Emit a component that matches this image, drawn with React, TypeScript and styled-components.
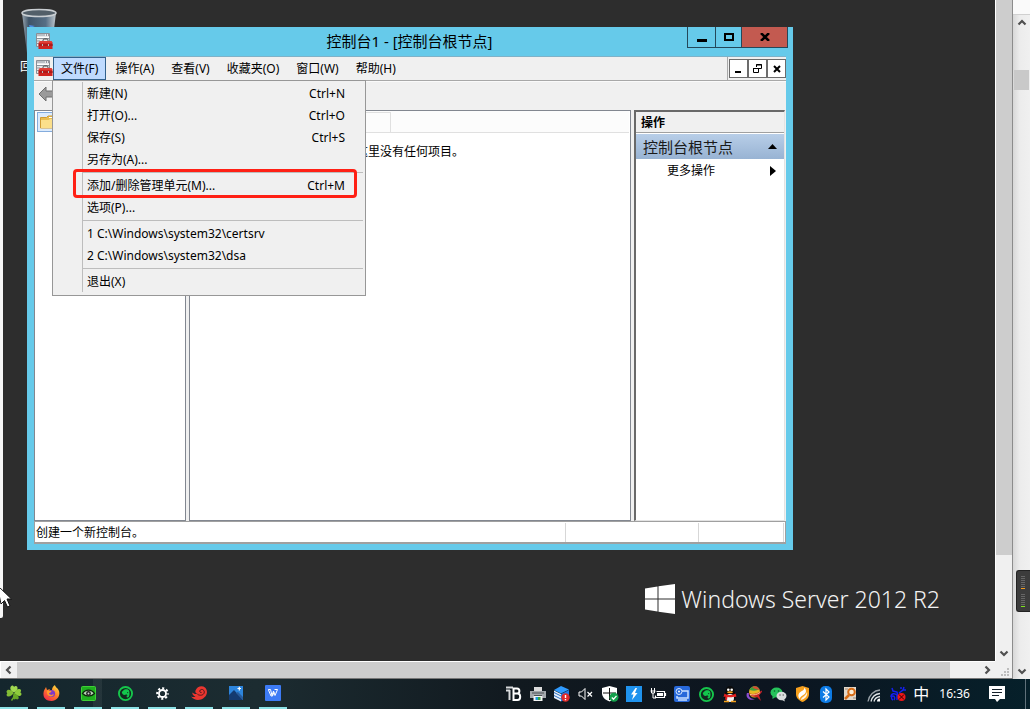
import React from "react";
import styled, { createGlobalStyle } from "styled-components";

const uiFont = `"Noto Sans", "Noto Sans CJK SC", sans-serif`;

const GlobalStyle = createGlobalStyle`
  * { box-sizing: border-box; }
  body { margin: 0; background: #2d2d2d; font-family: ${uiFont}; font-size: 12px; line-height: 16px; color: #000; }
  button { margin: 0; padding: 0; border: 0; background: none; color: inherit; font: inherit; }
  svg { display: block; flex: none; }
  h1, h2, p { margin: 0; padding: 0; font-weight: 400; }
`;

const Page = styled.div`
  display: flex;
  flex-direction: column;
  min-height: 100vh;
`;

const Workspace = styled.div`
  flex: 1;
  display: flex;
`;

const Viewer = styled.main`
  flex: 1;
  min-width: 0;
  display: grid;
  grid-template-columns: minmax(0, 1fr) 17px;
  grid-template-rows: minmax(0, 1fr) 17px;
  background: #f0f0f0;
  border-right: 1px solid #8c8c8c;
  border-bottom: 1px solid #777;
`;

const Desktop = styled.section`
  position: relative;
  min-height: 640px;
  overflow: hidden;
  background: #2d2d2d;
`;

const EdgeStrip = styled.div`
  position: absolute;
  left: 0;
  top: 0;
  bottom: 43px;
  width: 3px;
  background: #f6f6f6;
  border-radius: 0 0 2px 0;
`;

const Pointer = styled.svg`
  position: absolute;
  left: 0;
  bottom: 53px;
`;

const RecycleBin = styled.div`
  position: absolute;
  left: 20px;
  top: 8px;
  display: flex;
  flex-direction: column;
  gap: 3px;
  color: #fff;
`;

const Brand = styled.div`
  position: absolute;
  right: 55px;
  bottom: 46px;
  display: flex;
  align-items: center;
  gap: 6px;
  color: #f2f2f2;
  font-size: 23px;
  font-weight: 300;
  line-height: 32px;
  white-space: nowrap;
`;

const Track = styled.div<{ $vertical?: boolean }>`
  display: flex;
  flex-direction: ${(p) => (p.$vertical ? "column" : "row")};
  background: #f0f0f0;
  border: 0 solid #fff;
  border-width: ${(p) => (p.$vertical ? "0 0 0 1px" : "1px 0 0 1px")};
`;

const Thumb = styled.div<{ $grow: number }>`
  flex: ${(p) => p.$grow} 1 0;
  background: #cdcdcd;
`;

const Gap = styled.div<{ $grow: number }>`
  flex: ${(p) => p.$grow} 1 0;
`;

const ArrowButton = styled.button`
  flex: none;
  width: 16px;
  height: 16px;
  display: grid;
  place-items: center;
`;

const Corner = styled.div`
  display: flex;
  align-items: flex-end;
  justify-content: flex-end;
  padding: 2px 3px;
`;

const OuterBar = styled.aside`
  position: relative;
  flex: none;
  width: 17px;
  display: flex;
  flex-direction: column;
  align-items: center;
  background: linear-gradient(90deg, #d8d8d8, #ececec 40%, #f0f0f0);
`;

const OuterHead = styled.div`
  align-self: stretch;
  height: 15px;
  background: #fafafa;
  border-bottom: 1px solid #d0d0d0;
`;

const OuterThumb = styled.div`
  width: 15px;
  height: 20px;
  margin: 39px 0 auto;
  background: #c9c9c9;
`;

const Meter = styled.div`
  position: absolute;
  right: 0;
  bottom: 67px;
  width: 14px;
  height: 42px;
  padding: 4px 3px;
  background: #3c3c3c;
  border: 1px solid #222;
  border-right: 0;
  border-radius: 3px 0 0 3px;
`;

/* Console window */

const Window = styled.section`
  position: absolute;
  left: 27px;
  right: 202px;
  top: 27px;
  bottom: 111px;
  min-height: 420px;
  display: flex;
  flex-direction: column;
  padding: 0 7px 6px;
  background: #66caea;
`;

const TitleBar = styled.header`
  position: relative;
  display: flex;
  align-items: center;
  height: 30px;
  padding-left: 2px;
  border-bottom: 1px solid #7fb2c8;
`;

const Title = styled.h1`
  flex: 1;
  margin-right: 20px;
  padding-bottom: 2px;
  text-align: center;
  font-size: 15px;
  line-height: 24px;
`;

const CaptionButtons = styled.div`
  position: absolute;
  right: -2px;
  top: 0;
  display: flex;
  border: 1px solid #24485a;
  border-top: 0;
`;

const CaptionButton = styled.button<{ $width: number; $close?: boolean }>`
  width: ${(p) => p.$width}px;
  height: 20px;
  display: grid;
  place-items: center;
  background: ${(p) => (p.$close ? "#c35a50" : "transparent")};
  & + & { border-left: 1px solid #24485a; }
`;

const MenuBar = styled.nav`
  position: relative;
  display: flex;
  gap: 1px;
  height: 24px;
  padding-left: 2px;
  background: #f0f0f0;
  border-bottom: 1px solid #a8a8a8;
`;

const MenuIcon = styled.span`
  display: flex;
  align-items: center;
  width: 16px;
`;

const MenuButton = styled.button<{ $open?: boolean }>`
  padding: 1px 7px 0;
  border: 1px solid ${(p) => (p.$open ? "#31618c" : "transparent")};
  background: ${(p) => (p.$open ? "#bfdbff" : "transparent")};
  white-space: nowrap;
`;

const MdiButtons = styled.div`
  display: flex;
  align-items: center;
  margin-left: auto;
  padding-left: 1px;
  border-left: 1px solid #a8a8a8;
`;

const MdiButton = styled.button`
  width: 19px;
  height: 19px;
  display: grid;
  place-items: center;
  border: 1px solid #6c6c6c;
  background: #fff;
`;

const DropMenu = styled.div`
  position: absolute;
  z-index: 2;
  left: 18px;
  top: 23px;
  width: 314px;
  padding: 1px 2px 3px;
  background: #f0f0f0;
  border: 1px solid #979797;
`;

const MenuList = styled.div`
  margin-left: 27px;
  border-left: 1px solid #bdbdbd;
`;

const MenuItem = styled.button`
  position: relative;
  display: flex;
  justify-content: space-between;
  align-items: center;
  width: 100%;
  height: 22px;
  padding: 2px 18px 0 4px;
  text-align: left;
  white-space: nowrap;
`;

const Rule = styled.hr`
  height: 1px;
  margin: 2px 0 1px;
  border: 0;
  background: #bdbdbd;
`;

const Highlight = styled.span`
  position: absolute;
  left: -10px;
  right: 6px;
  top: -5px;
  bottom: -2px;
  border: 3px solid #ff2015;
  border-radius: 4px;
  pointer-events: none;
`;

const ToolBar = styled.div`
  display: flex;
  align-items: center;
  height: 29px;
  padding: 0 4px 5px;
  background: #f0f0f0;
  border-top: 1px solid #fafafa;
`;

const Panes = styled.div`
  flex: 1;
  min-height: 0;
  display: grid;
  grid-template-columns: 152px minmax(0, 1fr) 151px;
  gap: 3px;
  padding-right: 1px;
  background: #f0f0f0;
`;

const Pane = styled.section`
  display: flex;
  flex-direction: column;
  background: #fff;
  border: 1px solid #828790;
`;

const TreeNode = styled.button`
  margin: 1px 2px;
  height: 20px;
  padding: 0 2px;
  display: flex;
  align-items: center;
  background: #dcebfc;
  border: 1px solid #84acdd;
`;

const ColumnHead = styled.div`
  height: 22px;
  padding-top: 1px;
  margin-right: 1px;
  background: #fcfcfc;
  border-bottom: 1px solid #e0e0e0;
`;

const Column = styled.div`
  width: 201px;
  height: 20px;
  border-top: 1px solid #e0e0e0;
  border-right: 1px solid #e0e0e0;
`;

const EmptyNote = styled.p`
  margin-top: 11px;
  text-align: center;
`;

const ActionsPane = styled(Pane)`
  border: 0;
  border-top: 2px solid #696969;
  border-left: 2px solid #696969;
  border-right: 1px solid #e3e3e3;
  border-bottom: 1px solid #e3e3e3;
`;

const ActionsHead = styled.h2`
  height: 21px;
  padding: 3px 5px 1px;
  font-size: 12px;
  font-weight: 700;
  background: #f0f0f0;
  border-bottom: 1px solid #a0a0a0;
`;

const ActionsTitle = styled.button`
  display: flex;
  justify-content: space-between;
  align-items: center;
  height: 25px;
  margin-top: 1px;
  padding: 0 7px;
  font-size: 15px;
  color: #1a1a1a;
  background: linear-gradient(#b8cee8, #98b3d3);
`;

const ActionItem = styled.button`
  display: flex;
  justify-content: space-between;
  align-items: center;
  height: 24px;
  padding: 0 8px 0 31px;
`;

const StatusBar = styled.footer`
  display: flex;
  height: 23px;
  padding-right: 1px;
  background: #fff;
  border: 1px solid #a0a0a0;
  border-bottom-width: 2px;
`;

const StatusCell = styled.span<{ $width?: number }>`
  flex: ${(p) => (p.$width ? `0 0 ${p.$width}px` : "1")};
  margin-top: 1px;
  padding: 2px 1px;
  line-height: 16px;
  border-right: 1px solid #d7d7d7;
`;

/* Host taskbar */

const TaskBar = styled.footer`
  display: flex;
  justify-content: space-between;
  height: 30px;
  background: linear-gradient(90deg, #14262d, #1c2c31 25%, #11191f 50%, #0c1520 75%, #06202a);
  color: #fff;
`;

const AppList = styled.div`
  display: flex;
  gap: 9px;
`;

const AppButton = styled.button<{ $stacked?: boolean }>`
  width: 28px;
  display: grid;
  place-items: center;
  border-bottom: 2px solid #8ce2e6;
  background: ${(p) =>
    p.$stacked ? "linear-gradient(90deg, transparent 19px, rgba(255, 255, 255, 0.06) 19px)" : "none"};
`;

const Tray = styled.div`
  display: flex;
  align-items: center;
`;

const TrayButton = styled.button<{ $narrow?: boolean }>`
  width: ${(p) => (p.$narrow ? 22 : 24)}px;
  height: 30px;
  display: grid;
  place-items: center;
  font-size: 16px;
`;

const Clock = styled.time`
  margin: 0 19px 0 7px;
`;

const ShowDesktop = styled.button`
  align-self: stretch;
  width: 5px;
  margin-left: 20px;
  border-left: 1px solid #60717a;
`;

const ConsoleIcon = () => (
  <svg width="17" height="17" viewBox="0 0 17 17">
    <path d="M.5.5h13v13H.5z" fill="#e6e8ea" stroke="#8a8f96" />
    <path d="M1 2h8" stroke="#8c96a0" />
    <path d="M1 4.500h12" stroke="#fff" />
    <path d="M1 5.500h12M1 8h3M1 10.500h2" stroke="#8b939b" />
    <path d="M10 2h1M12 2h1" stroke="#445" />
    <path d="M7 9V7.500C7 6.500 7.500 6 8.500 6h2c1 0 1.500.5 1.500 1.500V9" fill="none" stroke="#3a3a3a" />
    <path d="M3 9.500L4 8h11.500l1 1.500V16H2.500V9.500z" fill="#cf2420" />
    <path d="M3 9h13" stroke="#ee5a4e" />
    <path d="M2.500 12H17" stroke="#8e1012" />
    <path d="M6 11h1v2H6zM12 11h1v2h-1z" fill="#b9bcc0" />
  </svg>
);

const BinIcon = () => (
  <svg width="38" height="48" viewBox="0 0 38 48">
    <defs>
      <linearGradient id="bin" x1="0" x2="1" y1="0" y2="0">
        <stop offset="0" stopColor="#9aa7b1" />
        <stop offset=".2" stopColor="#3f5468" />
        <stop offset=".7" stopColor="#566e84" />
        <stop offset="1" stopColor="#c0c8ce" />
      </linearGradient>
    </defs>
    <path d="M2 5l5 40c4 3 20 3 24 0l5-40z" fill="url(#bin)" />
    <ellipse cx="19" cy="5" rx="17" ry="3.500" fill="#525f69" stroke="#c9ced2" strokeWidth="1.500" />
    <path d="M9 17l6 1-5 2z" fill="#4d8ee8" />
  </svg>
);

const Chevron = ({ turn }: { turn: number }) => (
  <svg width="10" height="10" viewBox="0 0 10 10">
    <path d="M1.500 6.500L5 3l3.500 3.500" transform={`rotate(${turn} 5 5)`} fill="none" stroke="#505050" strokeWidth="2.200" />
  </svg>
);

const Evernote = () => (
  <svg width="15" height="15" viewBox="0 0 16 16">
    <circle cx="8" cy="8" r="7" fill="#12281f" stroke="#16c64c" strokeWidth="2" />
    <path d="M4 6.500L6.500 4C9 3 11.500 3.500 12 5.500c.6 3 .2 5.500-1 6.500-1 .5-2-.2-1.800-1.200.1-.8 1-.6 1.300-.4-.2-1-1.500-1-2-1.300C6.500 10 4.500 9.500 4 6.500z" fill="#13c74d" />
    <circle cx="10.300" cy="7" r=".6" fill="#12281f" />
  </svg>
);

const taskApps: { name: string; stacked?: boolean; icon: React.ReactNode }[] = [
  {
    name: "Clover",
    icon: (
      <svg width="16" height="16" viewBox="0 0 16 16">
        <path d="M8 8c1 3 0 5-2.500 7.500" stroke="#6aa82a" strokeWidth="1.500" fill="none" />
        <path d="M8 7.500C5 6.500 3.500 3.500 4.800 1.500 6 0 7.500.5 8 2c1-1.500 3-1.200 3.500.5.5 2-1.500 4-3.500 5z" fill="#a0d850" />
        <path d="M8.500 8c.5-2.500 3-4.500 5-4 2 .3 2 2.500.7 3.300C16 8 16 10.500 14 11c-2 .3-4.500-1-5.500-3z" fill="#8ecb3c" />
        <path d="M7.500 8C6 5.500 3 4.200 1.300 5.200.2 6 .3 7.500 1.300 8.200 0 9.500.5 11.500 2.500 11.500c2 0 4-1.500 5-3.500z" fill="#82bd35" />
        <path d="M8 8.500c2.500.5 5 2.500 4.700 4.500-.3 1.700-2 1.800-2.800.8-1 1.200-2.700.7-2.900-.8-.2-1.500.3-3 1-4.500z" fill="#68a826" />
      </svg>
    ),
  },
  {
    name: "Firefox",
    icon: (
      <svg width="17" height="17" viewBox="0 0 17 17">
        <defs>
          <linearGradient id="fox" x1=".9" y1="0" x2=".2" y2="1">
            <stop offset="0" stopColor="#ffe640" />
            <stop offset=".5" stopColor="#ff7a2a" />
            <stop offset="1" stopColor="#f0284c" />
          </linearGradient>
        </defs>
        <path d="M3 2l1 3 3-1-1 2 3-1c0-2 1-4 3-5 0 2 3 3 4 6 1.500 5-2 10-7.500 10S0 13 .5 8C.7 5.500 2 4 3 2z" fill="url(#fox)" />
        <circle cx="8.500" cy="8.500" r="3.600" fill="#8038c8" />
        <path d="M4 6c2-1 3 0 4.500 0C8 8 6 7.500 6 8.500c1 2 4 1.500 5 .5-1 4-8 3-7-3z" fill="#ff9a2a" />
      </svg>
    ),
  },
  {
    name: "Viewer",
    stacked: true,
    icon: (
      <svg width="15" height="15" viewBox="0 0 15 15">
        <rect x=".5" y=".5" width="14" height="14" rx="1" fill="#1fae1f" stroke="#3fd036" />
        <path d="M1.500 7.500c3-4.500 9-4.500 12 0-3 3.500-9 3.500-12 0z" fill="#b9d4b6" stroke="#0c260c" strokeWidth="1.300" />
        <circle cx="7.500" cy="7.500" r="2.400" fill="#222" />
        <circle cx="7.500" cy="7.500" r="1" fill="#ccc" />
      </svg>
    ),
  },
  { name: "Evernote", icon: <Evernote /> },
  {
    name: "设置",
    icon: (
      <svg width="13" height="13" viewBox="0 0 14 14">
        <circle cx="7" cy="7" r="3.800" fill="none" stroke="#fff" strokeWidth="2" />
        <circle cx="7" cy="7" r="5.700" fill="none" stroke="#fff" strokeWidth="2.200" strokeDasharray="2.240 2.240" strokeDashoffset="1.100" />
      </svg>
    ),
  },
  {
    name: "Shell",
    icon: (
      <svg width="17" height="16" viewBox="0 0 17 16">
        <path d="M4.500 5.500C6 1.500 11 0 14 2.500c4 4 1.500 10-4 12-4 1.200-7.500 0-10-3 2 .8 3.500.7 4.500.2C2 10.500 1 9 1.500 7.500 3 9 5 9.300 6.500 9 4.500 8.500 4 7 4.500 5.500z" fill="#ea3630" />
        <path d="M6.500 9.300c2.500 1.700 6 1 6.700-1.500.6-2.700-2.200-4.300-3.900-2.800-1.200 1.200-.3 3 1.200 2.500" fill="none" stroke="#4a1a1c" strokeWidth="1" />
      </svg>
    ),
  },
  {
    name: "照片",
    icon: (
      <svg width="14" height="14" viewBox="0 0 14 14">
        <path d="M0 0h14v14H0z" fill="#2d85dc" />
        <path d="M0 9l5-5 9 10H0z" fill="#143a70" />
        <path d="M7 7l2-1 5 5v3z" fill="#285c9c" />
        <path d="M8.500 2.500h3.500M10.300 .8v3.600" stroke="#fff" strokeWidth="1.200" />
      </svg>
    ),
  },
  {
    name: "WPS",
    icon: (
      <svg width="16" height="16" viewBox="0 0 16 16">
        <rect width="16" height="16" rx="1" fill="#3d7bf5" />
        <path d="M3.200 4.500h2.300L7 10.500 8.500 6 10 10.500l2.500-6H9.500M3.500 5L6 11h1.500L9 7" fill="none" stroke="#fff" strokeWidth="1" />
      </svg>
    ),
  },
];

const trayIcons: { name: string; icon: React.ReactNode }[] = [
  {
    name: "TB",
    icon: (
      <svg width="16" height="16" viewBox="0 0 16 16">
        <path d="M0 1.500h7M0 4.500h4M3.500 4v10" stroke="#d8dadc" strokeWidth="2" />
        <path d="M7.500 2.500H11c3.200 0 3.200 5 0 5H7.500zM7.500 7.500h4c3.600 0 3.600 6.500 0 6.500h-4z" fill="none" stroke="#fff" strokeWidth="2" />
      </svg>
    ),
  },
  {
    name: "打印机",
    icon: (
      <svg width="16" height="16" viewBox="0 0 16 16">
        <path d="M4 1h8v5H4z" fill="#dcdcdc" />
        <path d="M0 5h16v7H0z" fill="#a4a8ac" />
        <path d="M2 7h12M4 9.500h8" stroke="#4c5054" />
        <path d="M3.500 10h9v5h-9z" fill="#f5f5f5" />
        <path d="M5.500 11H8v3H5.500z" fill="#1f9adb" />
        <path d="M8 11h2.500v3H8z" fill="#3aa640" />
      </svg>
    ),
  },
  {
    name: "服务器",
    icon: (
      <svg width="16" height="16" viewBox="0 0 16 16">
        <path d="M0 4l7-4 8 3.500-8 4z" fill="#2f9bff" />
        <path d="M0 4.500l7 3.500v7.500L0 12z" fill="#e8f0fa" />
        <path d="M15 4L7 8v7.500l8-4z" fill="#1f7be6" />
        <path d="M0 6.500L7 10M0 9.500L7 13" stroke="#2a6cc0" fill="none" />
        <circle cx="11.500" cy="11.500" r="4.200" fill="#e02a2a" />
        <path d="M11.500 9v3M11.500 13v1.200" stroke="#fff" strokeWidth="1.400" />
      </svg>
    ),
  },
  {
    name: "静音",
    icon: (
      <svg width="16" height="16" viewBox="0 0 16 16">
        <path d="M1 6h2.500L7 2.500v11L3.500 10H1z" fill="none" stroke="#fff" />
        <path d="M9.500 6l4.500 4.500M14 6l-4.500 4.500" stroke="#fff" strokeWidth="1.200" />
      </svg>
    ),
  },
  {
    name: "安全中心",
    icon: (
      <svg width="17" height="16" viewBox="0 0 17 16">
        <path d="M7.500 0L15 2v5c0 4-3 7-7.500 8.500C3 14 0 11 0 7V2z" fill="#fff" />
        <path d="M7.500 2v12M1 7h13" stroke="#111" />
        <circle cx="12" cy="11.300" r="4.500" fill="#15a04c" />
        <path d="M9.800 11.500l1.700 1.700 3-3.300" fill="none" stroke="#fff" strokeWidth="1.300" />
      </svg>
    ),
  },
  {
    name: "闪电",
    icon: (
      <svg width="16" height="16" viewBox="0 0 16 16">
        <path d="M0 0h16v16H0z" fill="#1f93ee" />
        <path d="M9.500 2L5 8.500h2.500L6 14l5.500-7H9l2-5z" fill="#fff" />
      </svg>
    ),
  },
  {
    name: "电源",
    icon: (
      <svg width="17" height="16" viewBox="0 0 17 16">
        <path d="M6.500 5.500h8v6h-9v-2M15.500 7v3" fill="none" stroke="#fff" strokeWidth="1.200" />
        <path d="M7 7h6v3H7z" fill="#fff" />
        <path d="M1.500 2v3M4.500 2v3M.5 5h5M1.500 5v2h3V5M3 7v5h3" fill="none" stroke="#fff" />
      </svg>
    ),
  },
  {
    name: "远程",
    icon: (
      <svg width="16" height="16" viewBox="0 0 16 16">
        <rect width="16" height="16" rx="2" fill="#2869da" />
        <path d="M8 5h6v7H3v-2M4 14h9" stroke="#c9e0ff" strokeWidth="1.500" fill="none" />
        <circle cx="5" cy="5.500" r="3" fill="#2869da" stroke="#d8e8ff" />
        <circle cx="5" cy="5.500" r="1" fill="#fff" />
      </svg>
    ),
  },
  { name: "Evernote", icon: <Evernote /> },
  {
    name: "QQ",
    icon: (
      <svg width="16" height="17" viewBox="0 0 16 17">
        <ellipse cx="8" cy="10" rx="6" ry="6" fill="#0b0b0b" />
        <ellipse cx="8" cy="5" rx="4.500" ry="5" fill="#0b0b0b" />
        <ellipse cx="8" cy="12" rx="4" ry="4" fill="#f2f2f2" />
        <circle cx="6.300" cy="3.700" r="1.300" fill="#fff" />
        <circle cx="9.700" cy="3.700" r="1.300" fill="#fff" />
        <ellipse cx="8" cy="6.200" rx="3" ry="1" fill="#f7a51c" />
        <path d="M2.500 7.500c3 2 8 2 11 0l1 3c-1 .5-2 .5-3 .2-2 .7-4 .7-6 .2L5 14l-2-.5.5-3-2 .5z" fill="#e32020" />
        <path d="M2 15.500h5M9 15.500h5" stroke="#f2a01c" strokeWidth="1.600" />
      </svg>
    ),
  },
  {
    name: "输入球",
    icon: (
      <svg width="17" height="16" viewBox="0 0 17 16">
        <circle cx="8.500" cy="6" r="5.500" fill="#e6b722" />
        <path d="M3.500 4c2-5 8-5 10-1-3 2-6 2-10 1z" fill="#3f9e3a" />
        <path d="M6 1c4-2 7 1 7.500 3-3-1-5-1-7.500-3z" fill="#d84a32" />
        <path d="M1 7c-2 5 3 8 8 6-4 0-7-2-6-6z" fill="#8a4ed0" />
        <path d="M3 7c3 2 8 1 12-2 2-1 1 2-2 4l2 6-4-4c-4 0-7-1-8-4z" fill="#c92228" />
        <path d="M4 8.500c4 1 7 0 10-2" stroke="#ffd08a" fill="none" />
      </svg>
    ),
  },
  {
    name: "微信",
    icon: (
      <svg width="17" height="16" viewBox="0 0 17 16">
        <ellipse cx="6.500" cy="6.500" rx="6" ry="5" fill="#26c35b" />
        <path d="M2.500 10v3l3-2z" fill="#26c35b" />
        <ellipse cx="11.500" cy="10" rx="5" ry="4.200" fill="#d9dddd" />
        <path d="M14 13l1 2.500-3-1.500z" fill="#d9dddd" />
        <circle cx="4.500" cy="5" r=".8" fill="#0b5c2a" />
        <circle cx="8.500" cy="5" r=".8" fill="#0b5c2a" />
        <circle cx="10" cy="9" r=".7" fill="#555" />
        <circle cx="13.200" cy="9" r=".7" fill="#555" />
      </svg>
    ),
  },
  {
    name: "火绒",
    icon: (
      <svg width="15" height="16" viewBox="0 0 15 16">
        <path d="M7.500 0L14 2v6c0 4-3 6.500-6.500 8C4 14.500 1 12 1 8V2z" fill="#f7a01d" />
        <path d="M4.500 13C2.500 10 3 7.500 6 5.500c2-1 3.500-2 3.500-4C12 5 11 7 9 8.500 7 10 5 11 4.500 13z" fill="#fff" />
        <path d="M6 14c0-3 5-4 6-8 1 4-2 7-6 8z" fill="#fff3e0" />
      </svg>
    ),
  },
  {
    name: "蓝牙",
    icon: (
      <svg width="12" height="17" viewBox="0 0 12 17">
        <rect width="12" height="17" rx="5" fill="#0d7be5" />
        <path d="M3 5.500l6 5.500-3 3V3l3 3-6 5.500" fill="none" stroke="#fff" strokeWidth="1.200" />
      </svg>
    ),
  },
  {
    name: "Everything",
    icon: (
      <svg width="14" height="16" viewBox="0 0 14 16">
        <path d="M1 1h12v13H1z" fill="#e3d8ca" />
        <path d="M2 3h3M10 12h3" stroke="#9d8c7a" />
        <circle cx="8.500" cy="6" r="3.300" fill="#fff0d8" stroke="#d86c15" strokeWidth="2" />
        <path d="M6 9l-4 4" stroke="#d86c15" strokeWidth="2.500" />
      </svg>
    ),
  },
  {
    name: "无线网络",
    icon: (
      <svg width="14" height="15" viewBox="0 0 14 15">
        <g fill="none" stroke="#e2e6e8" strokeWidth="1.300">
          <path d="M1 14.500C2 8 7 3.500 13 3" stroke="#9aa2a8" />
          <path d="M4 14.500C5 10 8 7 13 6.500" />
          <path d="M7 14.500c.5-2.500 2.500-4.500 6-5" />
        </g>
        <path d="M10 14.500c0-2 1-3 3-3v3z" fill="#fff" />
      </svg>
    ),
  },
  {
    name: "网络断开",
    icon: (
      <svg width="17" height="16" viewBox="0 0 17 16">
        <g fill="none" stroke="#1420f0" strokeWidth="1.500">
          <path d="M2 2l1 3 4 1 1 4M14 1l-1 3-4 3M11 3V1M1 11c0-4 4-4 6-2v5M3 14c-2-1-2-4 0-4s2 3 1 4M13 4h3" />
        </g>
        <circle cx="11.500" cy="11" r="4" fill="#f01818" />
        <path d="M9 8.500l5 5M14 8.500l-5 5" stroke="#300" />
      </svg>
    ),
  },
];

type Entry = { label: string; keys?: string; marked?: boolean } | null;

const fileMenu: Entry[] = [
  { label: "新建(N)", keys: "Ctrl+N" },
  { label: "打开(O)...", keys: "Ctrl+O" },
  { label: "保存(S)", keys: "Ctrl+S" },
  { label: "另存为(A)..." },
  null,
  { label: "添加/删除管理单元(M)...", keys: "Ctrl+M", marked: true },
  { label: "选项(P)..." },
  null,
  { label: "1 C:\\Windows\\system32\\certsrv" },
  { label: "2 C:\\Windows\\system32\\dsa" },
  null,
  { label: "退出(X)" },
];

const menus = ["文件(F)", "操作(A)", "查看(V)", "收藏夹(O)", "窗口(W)", "帮助(H)"];

const ConsoleWindow = () => (
  <Window>
    <TitleBar>
      <ConsoleIcon />
      <Title>控制台1 - [控制台根节点]</Title>
      <CaptionButtons>
        <CaptionButton $width={27} aria-label="最小化">
          <svg width="10" height="10"><path d="M0 7h10v3H0z" /></svg>
        </CaptionButton>
        <CaptionButton $width={26} aria-label="最大化">
          <svg width="10" height="8"><path d="M1 1h8v6H1z" fill="none" stroke="#000" strokeWidth="2" /></svg>
        </CaptionButton>
        <CaptionButton $width={46} $close aria-label="关闭">
          <svg width="10" height="8"><path d="M1 0l8 8M9 0L1 8" stroke="#000" strokeWidth="2.500" /></svg>
        </CaptionButton>
      </CaptionButtons>
    </TitleBar>
    <MenuBar>
      <MenuIcon><ConsoleIcon /></MenuIcon>
      {menus.map((m, i) => (
        <MenuButton key={m} $open={i === 0} aria-haspopup="menu">{m}</MenuButton>
      ))}
      <MdiButtons>
        <MdiButton aria-label="最小化子窗口">
          <svg width="9" height="9"><path d="M1 7h6v2H1z" /></svg>
        </MdiButton>
        <MdiButton aria-label="还原子窗口">
          <svg width="9" height="9"><path d="M3.500 3V.5h5v4H6M3 1h6M.5 4.500h5v4h-5zM0 4.500h6" fill="none" stroke="#000" /></svg>
        </MdiButton>
        <MdiButton aria-label="关闭子窗口">
          <svg width="8" height="8"><path d="M1 1l6 6M7 1L1 7" stroke="#000" strokeWidth="2" /></svg>
        </MdiButton>
      </MdiButtons>
      <DropMenu role="menu">
        <MenuList>
          {fileMenu.map((e, i) =>
            e ? (
              <MenuItem key={i} role="menuitem">
                <span>{e.label}</span>
                {e.keys && <span>{e.keys}</span>}
                {e.marked && <Highlight />}
              </MenuItem>
            ) : (
              <Rule key={i} />
            )
          )}
        </MenuList>
      </DropMenu>
    </MenuBar>
    <ToolBar>
      <button aria-label="后退">
        <svg width="18" height="16" viewBox="0 0 18 16">
          <path d="M1 8l7-7v4h9v6H8v4z" fill="#9a9a9a" stroke="#6e6e6e" />
        </svg>
      </button>
    </ToolBar>
    <Panes>
      <Pane>
        <TreeNode aria-label="控制台根节点">
          <svg width="16" height="14" viewBox="0 0 16 14">
            <path d="M.5 2.500h6L8 1h5l2 2v10H.5z" fill="#e9bd4e" stroke="#cf9b35" />
            <path d="M9 2.500h4" stroke="#fff" />
            <path d="M1 5h8l1-1h5v9H1z" fill="#fbdf8b" />
          </svg>
        </TreeNode>
      </Pane>
      <Pane>
        <ColumnHead><Column /></ColumnHead>
        <EmptyNote>这里没有任何项目。</EmptyNote>
      </Pane>
      <ActionsPane>
        <ActionsHead>操作</ActionsHead>
        <ActionsTitle>
          控制台根节点
          <svg width="9" height="5"><path d="M0 5l4.500-5L9 5z" /></svg>
        </ActionsTitle>
        <ActionItem>
          更多操作
          <svg width="6" height="10"><path d="M0 0l6 5-6 5z" /></svg>
        </ActionItem>
      </ActionsPane>
    </Panes>
    <StatusBar>
      <StatusCell>创建一个新控制台。</StatusCell>
      <StatusCell $width={133} />
      <StatusCell $width={85} />
    </StatusBar>
  </Window>
);

export default function App() {
  return (
    <Page>
      <GlobalStyle />
      <Workspace>
        <Viewer>
          <Desktop>
            <RecycleBin>
              <BinIcon />
              回收站
            </RecycleBin>
            <Brand>
              <svg width="30" height="30" viewBox="0 0 30 30" fill="#fff">
                <path d="M0 4.500l12.500-2v12H0zM13.500 2.300L30 0v14.500H13.500zM0 15.500h12.500v12L0 25.500zM13.500 15.500H30V30l-16.500-2.300z" />
              </svg>
              Windows Server 2012 R2
            </Brand>
            <EdgeStrip />
            <Pointer width="14" height="20" viewBox="0 0 14 20">
              <path d="M-3 -3L11.500 11H7l3 7-2.500 1L4.500 12.500 1 16z" fill="#fff" stroke="#111" />
            </Pointer>
            <ConsoleWindow />
          </Desktop>
          <Track $vertical>
            <Thumb $grow={555} />
            <Gap $grow={90} />
            <ArrowButton aria-label="向下"><Chevron turn={180} /></ArrowButton>
          </Track>
          <Track>
            <ArrowButton aria-label="向左"><Chevron turn={-90} /></ArrowButton>
            <Thumb $grow={933} />
            <Gap $grow={29} />
            <ArrowButton aria-label="向右"><Chevron turn={90} /></ArrowButton>
          </Track>
          <Corner>
            <svg width="8" height="8" fill="#bdbdbd">
              <path d="M6 0h2v2H6zM3 3h2v2H3zM6 3h2v2H6zM0 6h2v2H0zM3 6h2v2H3zM6 6h2v2H6z" />
            </svg>
          </Corner>
        </Viewer>
        <OuterBar>
          <OuterHead />
          <ArrowButton aria-label="页面向上"><Chevron turn={0} /></ArrowButton>
          <OuterThumb />
          <ArrowButton aria-label="页面向下"><Chevron turn={180} /></ArrowButton>
          <Meter>
            <svg width="6" height="33">
              <path d="M1 1.500h4M1 3.500h4M1 5.500h4M1 7.500h4M1 9.500h4M1 11.500h4M1 19.500h4M1 21.500h4M1 23.500h4M1 25.500h4M1 27.500h4M1 29.500h4" stroke="#666" />
              <path d="M1 13.500h4" stroke="#f39c1f" />
              <path d="M1 31.500h4" stroke="#7de01e" />
            </svg>
          </Meter>
        </OuterBar>
      </Workspace>
      <TaskBar>
        <AppList>
          {taskApps.map((a) => (
            <AppButton key={a.name} $stacked={a.stacked} aria-label={a.name}>{a.icon}</AppButton>
          ))}
        </AppList>
        <Tray>
          {trayIcons.map((t) => (
            <TrayButton key={t.name} aria-label={t.name}>{t.icon}</TrayButton>
          ))}
          <TrayButton $narrow>中</TrayButton>
          <Clock>16:36</Clock>
          <button aria-label="通知">
            <svg width="16" height="16" viewBox="0 0 16 16">
              <path d="M0 0h16v13h-5l-3 3-2-3H0z" fill="#fff" />
              <path d="M3 3.500h10M3 6.500h10M3 9.500h7" stroke="#15202a" />
            </svg>
          </button>
          <ShowDesktop aria-label="显示桌面" />
        </Tray>
      </TaskBar>
    </Page>
  );
}
